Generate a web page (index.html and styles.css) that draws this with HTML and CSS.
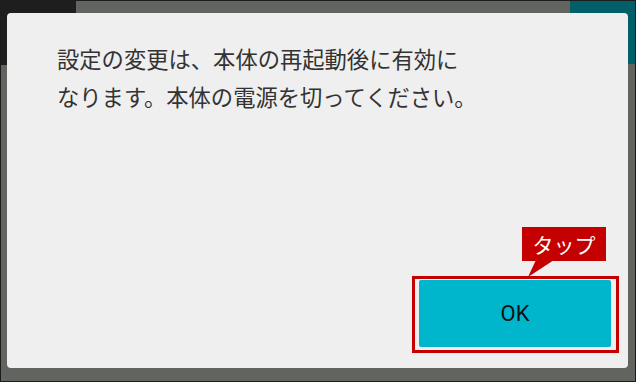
FILE: index.html
```html
<!DOCTYPE html>
<html lang="ja">
<head>
<meta charset="utf-8">
<link rel="stylesheet" href="styles.css">
</head>
<body>
<div class="frame">
  <div class="dialog">
    <p class="message">設定の変更は、本体の再起動後に有効に<br>なります。本体の電源を切ってください。</p>
    <div class="footer">
      <div class="highlight">
        <div class="callout">タップ</div>
        <button class="ok">OK</button>
      </div>
    </div>
  </div>
</div>
</body>
</html>
```
FILE: styles.css
```css
html, body {
  margin: 0;
  padding: 0;
}
.frame {
  box-sizing: border-box;
  width: 636px;
  height: 382px;
  border: 1px solid #1c1c1c;
  padding: 12px 7px 13px 6px;
  background:
    linear-gradient(#1e1e1e, #1e1e1e) 0 0 / 75px 64px no-repeat,
    linear-gradient(#005f68, #005f68) right 0 top 0 / 65px 63px no-repeat,
    #626460;
  font-family: "Noto Sans CJK JP", "Noto Sans", sans-serif;
}
.dialog {
  box-sizing: border-box;
  height: 355px;
  background: #efefef;
  border-radius: 4px;
  display: flex;
  flex-direction: column;
}
.message {
  margin: 0;
  padding: 26px 0 0 50px;
  font-size: 22.3px;
  line-height: 38px;
  color: #333333;
}
.footer {
  margin-top: auto;
  display: flex;
  justify-content: flex-end;
  padding: 0 9px 15px 0;
}
.highlight {
  position: relative;
  border: 3px solid #c40000;
  padding: 1px 5px 3px 4px;
}
.ok {
  display: block;
  width: 192px;
  height: 67px;
  border: none;
  border-radius: 2px;
  background: #00b6cd;
  color: #111;
  font-family: Roboto, "Noto Sans", sans-serif;
  font-size: 22px;
  padding: 0;
}
.callout {
  position: absolute;
  left: 107px;
  top: -52px;
  width: 84px;
  height: 34px;
  background: #c40000;
  color: #ffffff;
  font-size: 21px;
  line-height: 34px;
  text-align: center;
}
.callout::after {
  content: "";
  position: absolute;
  left: 6px;
  top: 33px;
  width: 26px;
  height: 17px;
  background: #c40000;
  clip-path: polygon(8px 0, 26px 0, 0 100%);
}
```
